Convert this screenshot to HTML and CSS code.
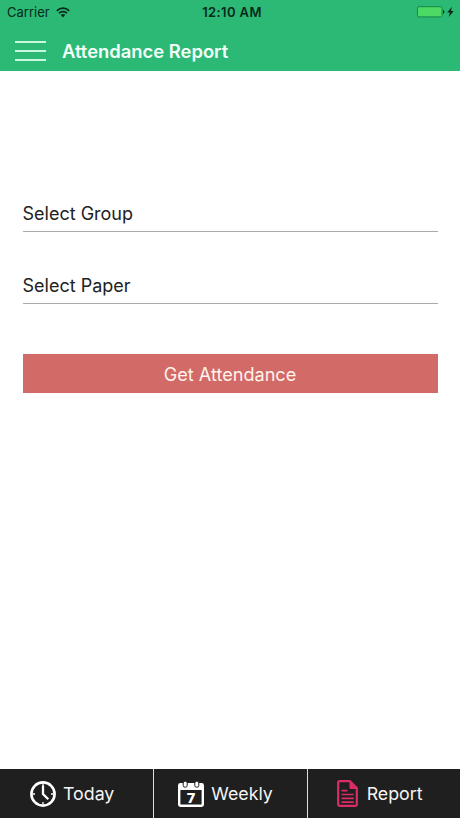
FILE: index.html
```html
<!DOCTYPE html>
<html lang="en">
<head>
    <meta charset="UTF-8">
    <meta name="viewport" content="width=device-width, initial-scale=1.0">
    <title>Attendance Report</title>
    <link rel="stylesheet" href="styles.css">
</head>
<body>
    <header class="header">
        <div class="status-bar">
            <div class="status-left">
                <span class="carrier">Carrier</span>
                <svg class="wifi" width="14" height="11" viewBox="0 0 14 11">
                    <path d="M.8 3.800C4.400.3 9.600.3 13.200 3.800M3 6.200c2.200-2.200 5.800-2.200 8 0" fill="none" stroke="#06291a" stroke-width="1.700"/>
                    <path d="M4.700 7.800c1.300-1.200 3.300-1.200 4.600 0L7 10.400z" fill="#06291a"/>
                </svg>
            </div>
            <span class="clock">12:10 AM</span>
            <div class="status-right">
                <svg width="38" height="12" viewBox="0 0 38 12">
                    <rect x=".5" y=".7" width="24.500" height="10.200" rx="1.600" fill="#4cd964" stroke="#168748" stroke-width="1"/>
                    <path d="M26 4c1.800.3 1.800 3.400 0 3.800z" fill="#06291a"/>
                    <path d="M35 .8l-4.800 5.700h2.700l-1.200 4.500 5-6h-2.800z" fill="#06291a"/>
                </svg>
            </div>
        </div>
        <div class="nav-bar">
            <button class="menu-button" aria-label="Menu">
                <span></span>
                <span></span>
                <span></span>
            </button>
            <h1 class="title">Attendance Report</h1>
        </div>
    </header>

    <main class="content">
        <div class="field">Select Group</div>
        <div class="field">Select Paper</div>
        <button class="submit-button">Get Attendance</button>
    </main>

    <nav class="tab-bar">
        <a class="tab today">
            <svg width="26" height="26" viewBox="0 0 26 26" fill="none" stroke="#fff">
                <circle cx="13" cy="13" r="11.600" stroke-width="2.600"/>
                <path d="M13 2.500v2.500M13 21v2.500M2.500 13H5M21 13h2.500" stroke-width="1.300"/>
                <path d="M13 4.500v8.500l5.300 5.300" stroke-width="2.300"/>
            </svg>
            <span>Today</span>
        </a>
        <a class="tab weekly">
            <svg width="26" height="26" viewBox="0 0 26 26">
                <rect x="1.200" y="3.200" width="23.600" height="21.600" rx="1.200" fill="none" stroke="#fff" stroke-width="2.400"/>
                <path d="M1.200 3h23.600v6H1.200z" fill="#fff"/>
                <rect x="5.200" y=".2" width="4" height="6" rx="1.800" fill="#fff" stroke="#1f1f1f" stroke-width="1"/>
                <rect x="16.800" y=".2" width="4" height="6" rx="1.800" fill="#fff" stroke="#1f1f1f" stroke-width="1"/>
                <text class="calendar-day" x="13" y="21.800" text-anchor="middle">7</text>
            </svg>
            <span>Weekly</span>
        </a>
        <a class="tab report">
            <svg width="21" height="27" viewBox="0 0 21 27" fill="none" stroke="#dc2c65">
                <path d="M13 1.200H2.500Q1.200 1.200 1.200 2.500v22Q1.200 25.800 2.500 25.800h16q1.300 0 1.300-1.300V8z" stroke-width="2.200" stroke-linejoin="round"/>
                <path d="M13 1v7.500h7z" fill="#dc2c65" stroke-width="1"/>
                <path d="M4.500 10.700h6M4.500 14.500h12.300M4.500 18.300h12.300M4.500 22.100h12.300" stroke-width="1.700"/>
            </svg>
            <span>Report</span>
        </a>
    </nav>
</body>
</html>
```

FILE: styles.css
```css
* {
    box-sizing: border-box;
}
body {
    display: flex;
    flex-direction: column;
    height: 818px;
    margin: 0;
    background-color: #fff;
    color: #222;
    font-family: Inter, Roboto, sans-serif;
}
button {
    padding: 0;
    border: none;
    background: none;
    font-family: inherit;
}
svg {
    display: block;
    flex-shrink: 0;
}

/* Header */
.header {
    height: 71px;
    background-color: #2cb976;
}
.status-bar {
    display: grid;
    grid-template-columns: 1fr auto 1fr;
    align-items: center;
    height: 24px;
    padding: 0 5px 0 7px;
    color: #06291a;
    font-size: 13px;
}
.status-left {
    display: flex;
    align-items: center;
    gap: 6px;
}
.clock {
    padding-left: 2px;
    font-weight: 600;
    letter-spacing: 0.4px;
}
.status-right {
    display: flex;
    justify-content: flex-end;
}
.nav-bar {
    display: flex;
    align-items: center;
    gap: 16px;
    height: 47px;
    padding: 6px 15px 0;
}
.menu-button {
    display: flex;
    flex-direction: column;
    gap: 7px;
    width: 31px;
}
.menu-button span {
    height: 2px;
    background-color: #c8f8df;
}
.title {
    margin: 0;
    color: #f3fff9;
    font-size: 18.4px;
    font-weight: 600;
}

/* Form */
.content {
    flex: 1;
    padding: 89px 22.5px 0;
}
.field {
    height: 72px;
    padding-top: 42px;
    border-bottom: 1px solid #aaa;
    font-size: 18px;
    line-height: 24px;
}
.submit-button {
    display: block;
    width: 100%;
    height: 39px;
    margin-top: 50px;
    padding-top: 1px;
    background-color: #d26a68;
    color: #fff3ea;
    font-size: 18.1px;
}

/* Bottom tabs */
.tab-bar {
    display: flex;
    height: 49px;
    background-color: #1f1f1f;
}
.tab {
    display: flex;
    align-items: center;
    gap: 7px;
    width: 33.33%;
    color: #f5f5f5;
    font-size: 17.8px;
}
.tab + .tab {
    border-left: 1px solid #ddd;
}
.today {
    padding-left: 30px;
}
.weekly {
    padding-left: 24px;
}
.report {
    gap: 9px;
    padding-left: 29px;
}
.calendar-day {
    fill: #fff;
    font-family: "DejaVu Sans", sans-serif;
    font-size: 14px;
    font-weight: bold;
}
```
